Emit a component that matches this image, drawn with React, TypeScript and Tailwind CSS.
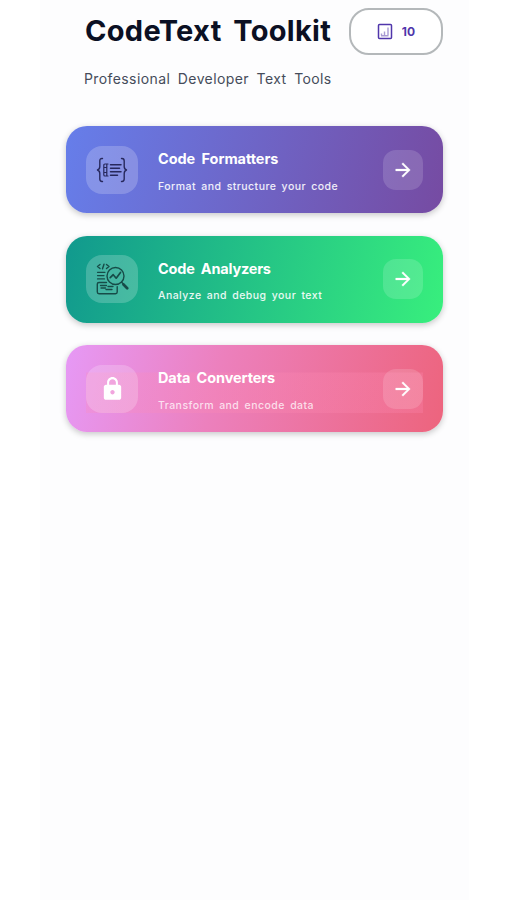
import type { ReactNode } from "react";
import clsx from "clsx";

type Tool = {
  title: string;
  description: string;
  gradient: string;
  inner?: string;
  textTone: string;
  titleSpacing: string;
  icon: ReactNode;
};

function BracesIcon() {
  return (
    <svg width="32" height="28" viewBox="0 0 32 28" fill="none" stroke="#27285c" strokeWidth="1.4" strokeLinecap="round" strokeLinejoin="round">
      <path d="M6.5 2.5H6c-1.6 0-2.2.9-2.2 2.4v5.6c0 1.8-.6 2.9-2.3 3.5 1.7.6 2.3 1.7 2.3 3.5v5.6c0 1.5.6 2.4 2.2 2.4h.5" />
      <path d="M25.5 2.5h.5c1.6 0 2.2.9 2.2 2.4v5.6c0 1.8.6 2.9 2.3 3.5-1.7.6-2.3 1.7-2.3 3.5v5.6c0 1.5-.6 2.4-2.2 2.4h-.5" />
      <path d="M12 8H9c-.8 0-1.2.5-1.2 1.3v9.4c0 .8.4 1.3 1.2 1.3h3M10.8 8v12M8.5 11.5h2M8.5 16.5h2" strokeWidth="1.2" />
      <path d="M14.5 8.7H25M14.5 12.2h9M14.5 15.7H25M14.5 19.2h7" strokeWidth="1.5" />
    </svg>
  );
}

function AnalyzeIcon() {
  return (
    <svg width="34" height="34" viewBox="0 0 34 34" fill="none" stroke="#174c48" strokeWidth="1.4" strokeLinecap="round" strokeLinejoin="round">
      <path d="M5 2.5l-2.5 2 2.5 2M11.5 2.5l2.5 2-2.5 2M9 2.2 7.5 6.8" />
      <path d="M2.5 10.3H10M2.5 13.6H9M2.5 16.9h7" strokeWidth="1.2" />
      <circle cx="20.5" cy="14" r="8.5" />
      <path d="m15.2 15.7 3-3 3 3.5 4.3-5.7" strokeWidth="1.7" />
      <path d="m26.7 20.2 2 2" />
      <path d="m28.5 22.5 3.7 3.7" strokeWidth="2.7" />
      <path d="M11.5 20.5H4c-1 0-1.7.6-1.7 1.6v8c0 1 .7 1.6 1.7 1.6h16.5c1 0 1.7-.6 1.7-1.6v-5.5" />
      <path d="M5.5 23.5h6M6 26h4.500M13 24.500h5M11 27.500h6" strokeWidth="1.3" />
    </svg>
  );
}

function LockIcon() {
  return (
    <svg width="27" height="26" viewBox="0 0 24 24" fill="#fff">
      <path d="M18 8h-1V6c0-2.76-2.24-5-5-5S7 3.24 7 6v2H6c-1.1 0-2 .9-2 2v10c0 1.1.9 2 2 2h12c1.1 0 2-.9 2-2V10c0-1.1-.9-2-2-2zm-6 9c-1.1 0-2-.9-2-2s.9-2 2-2 2 .9 2 2-.9 2-2 2zm3.1-9H8.900V6c0-1.710 1.390-3.100 3.100-3.100s3.100 1.390 3.100 3.100v2z" />
    </svg>
  );
}

function ArrowIcon() {
  return (
    <svg width="22" height="22" viewBox="0 0 24 24" fill="#fff" stroke="#fff" strokeWidth="0.3">
      <path d="m12 4-1.410 1.410L16.170 11H4v2h12.170l-5.580 5.590L12 20l8-8z" />
    </svg>
  );
}

const tools: Tool[] = [
  {
    title: "Code Formatters",
    description: "Format and structure your code",
    gradient: "bg-[linear-gradient(103deg,#667eea,#764ba2)]",
    textTone: "text-white/90",
    titleSpacing: "tracking-[-0.05px]",
    icon: <BracesIcon />,
  },
  {
    title: "Code Analyzers",
    description: "Analyze and debug your text",
    gradient: "bg-[linear-gradient(103deg,#11998e,#38ef7d)]",
    textTone: "text-white/90",
    titleSpacing: "tracking-[-0.2px]",
    icon: <AnalyzeIcon />,
  },
  {
    title: "Data Converters",
    description: "Transform and encode data",
    gradient: "bg-[linear-gradient(103deg,#e699f6,#ec80bd_40%,#ed647d)]",
    // soft highlight band behind the row, below its top edge
    inner: "bg-[linear-gradient(to_bottom,transparent_7px,rgba(255,140,180,0.25)_8px)]",
    textTone: "text-white/75",
    titleSpacing: "tracking-[-0.1px]",
    icon: <LockIcon />,
  },
];

function ToolCard({ tool }: { tool: Tool }) {
  return (
    <button
      type="button"
      className={clsx(
        "flex h-[87px] w-full items-center rounded-[21px] px-5 text-left shadow-[0_2px_6px_rgba(0,0,0,0.22)]",
        tool.gradient
      )}
    >
      <span className={clsx("flex h-12 flex-1 items-center", tool.inner)}>
        <span className="flex h-12 w-[52px] shrink-0 items-center justify-center rounded-2xl bg-white/20">
          {tool.icon}
        </span>
        <span className="ml-5 flex flex-1 flex-col gap-[11.5px] pt-[5px] whitespace-nowrap">
          <span className={clsx("text-[14.5px] leading-[18px] font-bold text-white [word-spacing:3px]", tool.titleSpacing)}>
            {tool.title}
          </span>
          <span className={clsx("text-[10.5px] leading-[14px] font-medium tracking-[0.46px] [word-spacing:2px]", tool.textTone)}>
            {tool.description}
          </span>
        </span>
        <span className="flex size-10 shrink-0 items-center justify-center rounded-[13px] bg-white/15">
          <ArrowIcon />
        </span>
      </span>
    </button>
  );
}

export default function App() {
  return (
    <div className="min-h-screen bg-white font-[Inter,sans-serif]">
      <main className="ml-10 min-h-screen w-[429px] bg-[#fdfdfe] px-[26px]">
        <header className="flex h-[100px] items-start justify-between pt-2 pl-[18px]">
          <div className="whitespace-nowrap">
            <h1 className="mt-[5px] pl-px text-[29px] leading-9 font-bold tracking-[0.3px] text-[#0b1023] [word-spacing:4.5px]">
              CodeText Toolkit
            </h1>
            <p className="mt-5 text-[14px] leading-5 tracking-[0.4px] text-[#454c5a] [word-spacing:3.3px]">
              Professional Developer Text Tools
            </p>
          </div>
          <div className="flex h-[47px] w-[94px] shrink-0 items-center justify-center gap-[9px] rounded-[20px] border-2 border-[#b4b8ba] bg-white text-[#5036ab]">
            <svg width="16" height="17" viewBox="0 0 16 17" fill="none" stroke="currentColor">
              <rect x="1.5" y="1.5" width="13" height="14" rx="1" strokeWidth="1.5" />
              <path d="M4.5 10.5v2M7.5 8.5v4M11 4.5v8M4 12.8h7.500" stroke="#a99bd3" strokeWidth="1.4" />
            </svg>
            <span className="text-[12px] leading-4 font-bold">10</span>
          </div>
        </header>
        <section className="flex flex-col gap-[22.5px] pt-[26px]">
          {tools.map((tool) => (
            <ToolCard key={tool.title} tool={tool} />
          ))}
        </section>
      </main>
    </div>
  );
}
